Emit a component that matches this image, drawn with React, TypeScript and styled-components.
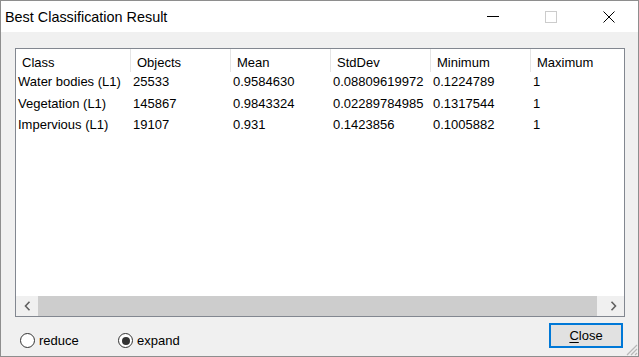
import styled, { createGlobalStyle } from "styled-components";

const GlobalStyle = createGlobalStyle`
    html, body {
        margin: 0;
        padding: 0;
        background: #ffffff;
    }
    * {
        box-sizing: border-box;
    }
`;

const Window = styled.div`
    width: 639px;
    height: 357px;
    border: 1px solid #8e8e8e;
    display: flex;
    flex-direction: column;
    font-family: "Liberation Sans", Arial, sans-serif;
    font-size: 13px;
    color: #000;
    position: relative;
    overflow: hidden;
`;

const TitleBar = styled.div`
    height: 31px;
    background: #ffffff;
    display: flex;
    align-items: center;
`;

const TitleText = styled.div`
    flex: 1;
    padding-left: 4px;
    font-size: 14.4px;
`;

const TitleButton = styled.div`
    width: 58px;
    height: 31px;
    display: flex;
    align-items: center;
    justify-content: center;
`;

const Body = styled.div`
    flex: 1;
    background: #f0f0f0;
    padding: 16px 13px 0 14px;
    display: flex;
    flex-direction: column;
`;

const ListBox = styled.div`
    height: 269px;
    border: 1px solid #828790;
    background: #ffffff;
    display: flex;
    flex-direction: column;
`;

const TableArea = styled.div`
    flex: 1;
    overflow: hidden;
`;

const HeaderRow = styled.div`
    display: flex;
    height: 23px;
`;

const HeaderCell = styled.div<{ $width: number }>`
    flex: 0 0 ${(p) => p.$width}px;
    border-right: 1px solid #e5e5e5;
    padding: 4px 0 0 6px;
    line-height: 19px;
    white-space: nowrap;
`;

const Row = styled.div`
    display: flex;
    height: 21.5px;
`;

const Cell = styled.div<{ $width: number }>`
    flex: 0 0 ${(p) => p.$width}px;
    padding-left: 2px;
    line-height: 20px;
    white-space: nowrap;
    overflow: hidden;
`;

const ScrollBar = styled.div`
    height: 20px;
    display: flex;
    background: #f0f0f0;
`;

const ScrollArrow = styled.div<{ $width: number }>`
    flex: 0 0 ${(p) => p.$width}px;
    display: flex;
    align-items: center;
    justify-content: center;
`;

const Thumb = styled.div`
    flex: 1;
    background: #cdcdcd;
    margin-right: 6px;
`;

const Footer = styled.div`
    margin-top: 6px;
    height: 25px;
    display: flex;
    align-items: flex-end;
    padding-left: 5px;
    padding-right: 2px;
`;

const RadioLabel = styled.label`
    width: 98px;
    height: 15px;
    display: flex;
    align-items: center;
    gap: 4px;
`;

const RadioCircle = styled.span<{ $checked?: boolean }>`
    width: 15px;
    height: 15px;
    border-radius: 50%;
    border: 1px solid #333333;
    background: #ffffff;
    display: flex;
    align-items: center;
    justify-content: center;
    &::after {
        content: "";
        width: 8px;
        height: 8px;
        border-radius: 50%;
        background: ${(p) => (p.$checked ? "#333333" : "transparent")};
    }
`;

const Spacer = styled.div`
    flex: 1;
`;

const CloseButton = styled.button`
    width: 74px;
    height: 25px;
    border: 2px solid #0078d7;
    background: #e1e1e1;
    font-family: "Liberation Sans", Arial, sans-serif;
    font-size: 13px;
    color: #000;
    padding: 0;
    display: flex;
    align-items: center;
    justify-content: center;
    u {
        text-decoration: underline;
        text-underline-offset: 2px;
    }
`;

const Grip = styled.svg`
    position: absolute;
    right: 0;
    bottom: 0;
`;

const columns = [
    { title: "Class", width: 115 },
    { title: "Objects", width: 100 },
    { title: "Mean", width: 100 },
    { title: "StdDev", width: 100 },
    { title: "Minimum", width: 100 },
    { title: "Maximum", width: 100 },
];

const rows = [
    ["Water bodies (L1)", "25533", "0.9584630", "0.08809619972", "0.1224789", "1"],
    ["Vegetation (L1)", "145867", "0.9843324", "0.02289784985", "0.1317544", "1"],
    ["Impervious (L1)", "19107", "0.931", "0.1423856", "0.1005882", "1"],
];

export default function App() {
    return (
        <>
            <GlobalStyle />
            <Window>
                <TitleBar>
                    <TitleText>Best Classification Result</TitleText>
                    <TitleButton>
                        <svg width="12" height="2" viewBox="0 0 12 2">
                            <line x1="0" y1="0.5" x2="12" y2="0.5" stroke="#000" strokeWidth="1" />
                        </svg>
                    </TitleButton>
                    <TitleButton>
                        <svg width="12" height="12" viewBox="0 0 12 12">
                            <rect x="0.5" y="0.5" width="11" height="11" fill="none" stroke="#cccccc" strokeWidth="1" />
                        </svg>
                    </TitleButton>
                    <TitleButton>
                        <svg width="12" height="12" viewBox="0 0 12 12">
                            <path d="M0.5 0.5 L11.5 11.5 M11.5 0.5 L0.5 11.5" stroke="#000" strokeWidth="1" />
                        </svg>
                    </TitleButton>
                </TitleBar>
                <Body>
                    <ListBox>
                        <TableArea>
                            <HeaderRow>
                                {columns.map((c) => (
                                    <HeaderCell key={c.title} $width={c.width}>{c.title}</HeaderCell>
                                ))}
                            </HeaderRow>
                            {rows.map((r) => (
                                <Row key={r[0]}>
                                    {r.map((v, i) => (
                                        <Cell key={i} $width={columns[i].width}>{v}</Cell>
                                    ))}
                                </Row>
                            ))}
                        </TableArea>
                        <ScrollBar>
                            <ScrollArrow $width={22}>
                                <svg width="7" height="10" viewBox="0 0 7 10">
                                    <path d="M5.5 0.8 L1.5 5 L5.5 9.2" fill="none" stroke="#606060" strokeWidth="1.6" />
                                </svg>
                            </ScrollArrow>
                            <Thumb />
                            <ScrollArrow $width={21}>
                                <svg width="7" height="10" viewBox="0 0 7 10">
                                    <path d="M1.5 0.8 L5.5 5 L1.5 9.2" fill="none" stroke="#606060" strokeWidth="1.6" />
                                </svg>
                            </ScrollArrow>
                        </ScrollBar>
                    </ListBox>
                    <Footer>
                        <RadioLabel>
                            <RadioCircle />
                            reduce
                        </RadioLabel>
                        <RadioLabel>
                            <RadioCircle $checked />
                            expand
                        </RadioLabel>
                        <Spacer />
                        <CloseButton>
                            <span><u>C</u>lose</span>
                        </CloseButton>
                    </Footer>
                </Body>
                <Grip width="14" height="14" viewBox="0 0 14 14">
                    <path d="M13 3 L3 13 M13 7 L7 13 M13 11 L11 13" stroke="#b8b8b8" strokeWidth="1.2" />
                </Grip>
            </Window>
        </>
    );
}
